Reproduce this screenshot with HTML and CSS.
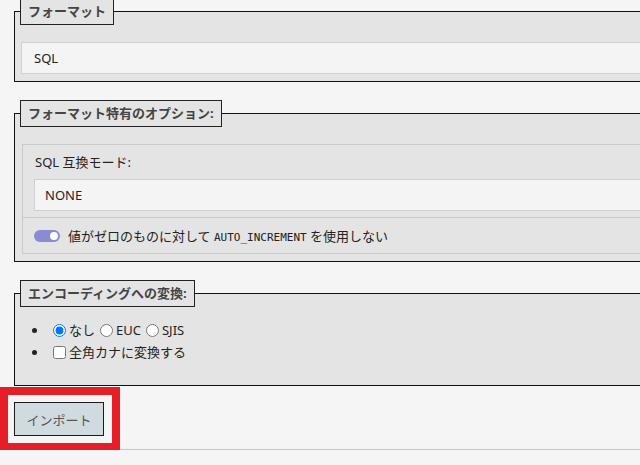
FILE: index.html
```html
<!DOCTYPE html>
<html lang="ja">

<head>
  <meta charset="UTF-8">
  <meta name="viewport" content="width=device-width, initial-scale=1">
  <title>インポート</title>
  <link rel="stylesheet" href="styles.css">
</head>

<body>

  <div class="page">

    <fieldset class="group">
      <legend>フォーマット</legend>
      <div class="select-box outer">SQL</div>
    </fieldset>

    <fieldset class="group">
      <legend>フォーマット特有のオプション:</legend>
      <div class="options-card">
        <div class="options-top">
          <div class="option-label">SQL 互換モード:</div>
          <div class="select-box inner">NONE</div>
        </div>
        <div class="options-row">
          <span class="toggle"><span class="knob"></span></span>
          <span>値がゼロのものに対して <code>AUTO_INCREMENT</code> を使用しない</span>
        </div>
      </div>
    </fieldset>

    <fieldset class="group encoding-group">
      <legend>エンコーディングへの変換:</legend>
      <ul class="encoding">
        <li><input type="radio" name="charset" id="none" checked><label for="none">なし</label><input type="radio" name="charset" id="euc"><label for="euc">EUC</label><input type="radio" name="charset" id="sjis"><label for="sjis">SJIS</label></li>
        <li><input type="checkbox" id="kana"><label for="kana">全角カナに変換する</label></li>
      </ul>
    </fieldset>

    <div class="form-footer">
      <span class="highlight">
        <button type="button">インポート</button>
      </span>
    </div>

  </div>

</body>

</html>
```

FILE: styles.css
```css
body {
  margin: 0;
  background-color: #f5f5f5;
  font-family: 'Noto Sans', 'Noto Sans CJK JP', sans-serif;
  font-size: 13px;
  color: #222;
  overflow: hidden;
}

.page {
  width: 700px;
  margin-top: -2px;
}

.group {
  margin: 0 0 18px 14px;
  padding: 17px 0 7px 6px;
  border: 1px solid #111;
  background-color: #e4e4e4;
}

.group legend {
  margin-left: -1px;
  padding: 3px 7px;
  border: 1px solid #222;
  background-color: #e4e4e4;
  color: #444;
  font-weight: bold;
  font-size: 13px;
  line-height: 19px;
}

.select-box {
  height: 30px;
  line-height: 30px;
  background-color: #f4f4f5;
  border: 1px solid #d0d0d2;
  border-right: none;
}

.select-box.outer {
  padding-left: 12px;
}

.select-box.inner {
  padding-left: 10px;
}

.options-card {
  margin-left: 1px;
  border: 1px solid #cacaca;
  border-right: none;
}

.options-top {
  padding: 8px 0 6px 11px;
  border-bottom: 1px solid #cacaca;
}

.option-label {
  line-height: 19px;
  margin-bottom: 7px;
  padding-left: 1px;
}

.options-row {
  display: flex;
  align-items: center;
  gap: 8px;
  height: 35px;
  padding-left: 11px;
}

.options-row code {
  font-family: 'DejaVu Sans Mono', monospace;
  font-size: 11px;
}

.toggle {
  display: inline-flex;
  justify-content: flex-end;
  align-items: center;
  width: 26px;
  height: 12px;
  padding: 0 2px;
  box-sizing: border-box;
  border-radius: 6px;
  background-color: #8b8bd1;
}

.knob {
  width: 8px;
  height: 8px;
  border-radius: 50%;
  background: white;
}

.encoding-group {
  padding-top: 12px;
}

.encoding {
  margin: 0;
  padding: 0 0 15px 27px;
  line-height: 22px;
}

.encoding input {
  vertical-align: -2px;
  margin: 0 3px 0 5px;
}

.form-footer {
  margin-top: -18px;
  padding: 16px 0 13px 14px;
  border-bottom: 1px solid #c6c6c6;
}

.highlight {
  position: relative;
  display: inline-block;
}

.highlight::after {
  content: "";
  position: absolute;
  top: -15px;
  right: -16px;
  bottom: -15px;
  left: -14px;
  border: 8px solid #e61e28;
}

button {
  display: block;
  width: 90px;
  height: 34px;
  padding: 0;
  border: 1px solid #1a1a1a;
  background-color: #d0dbe0;
  color: #555;
  font-family: 'Noto Sans', 'Noto Sans CJK JP', sans-serif;
  font-size: 13px;
}
```
